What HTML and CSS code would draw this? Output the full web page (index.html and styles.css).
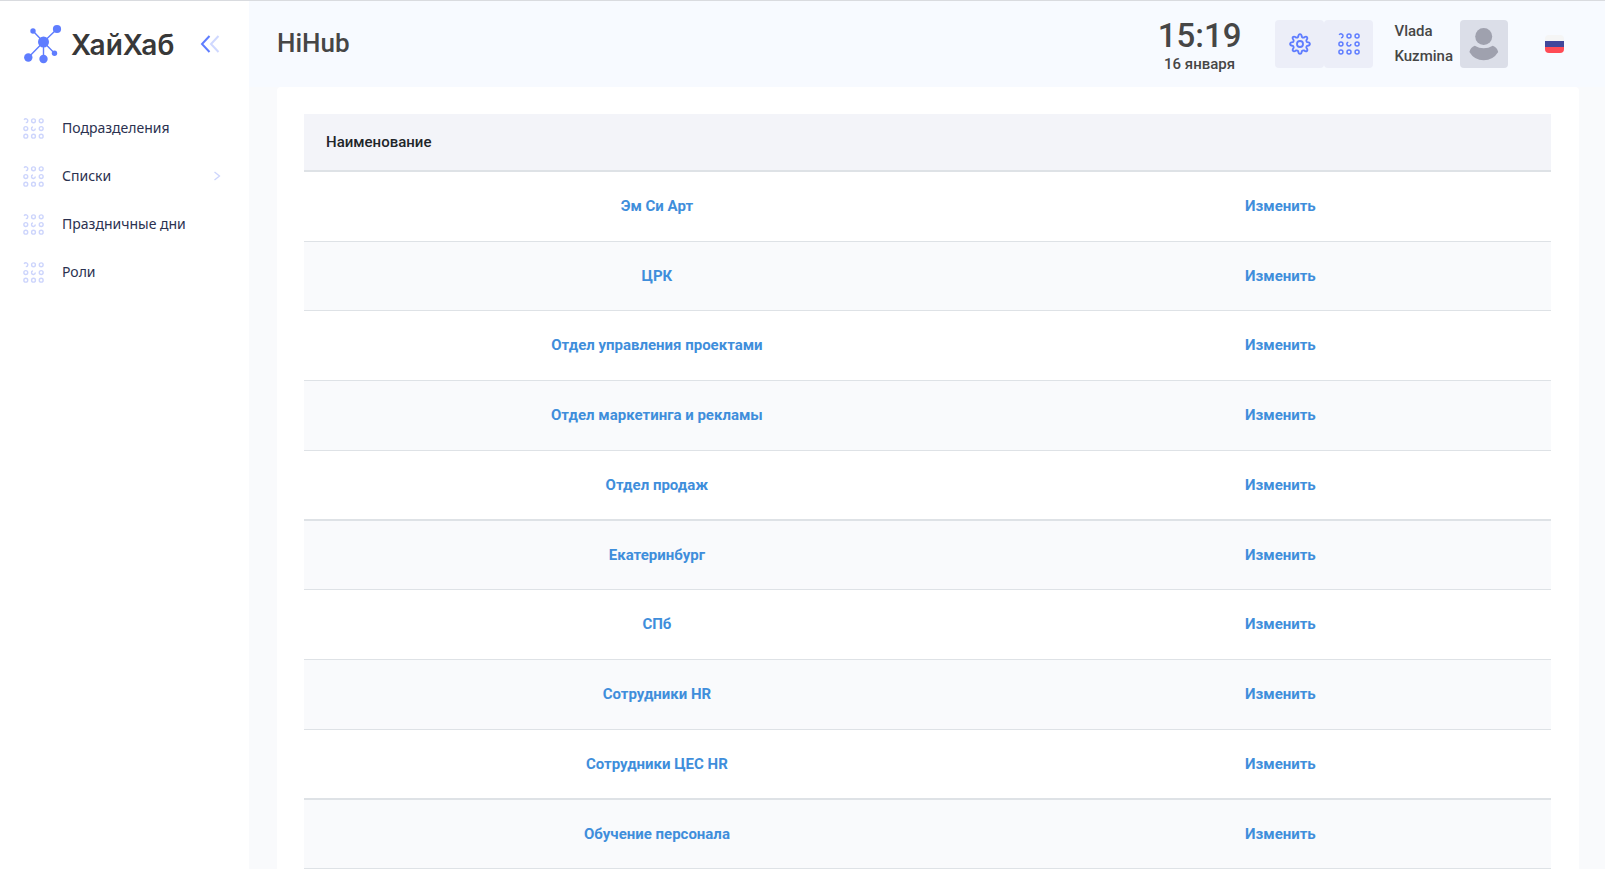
FILE: index.html
```html
<!DOCTYPE html>
<html lang="ru">
<head>
<meta charset="utf-8">
<title>ХайХаб</title>
<link rel="stylesheet" href="styles.css">
</head>
<body>
<svg class="sprite" aria-hidden="true">
  <symbol id="dots" viewBox="0 0 24 24">
    <g fill="none" stroke="currentColor" stroke-width="1.6">
      <path d="M1.300 2.100A2.200 2.200 0 1 1 3.200 5.300"/>
      <circle cx="12" cy="3.200" r="2.200"/><circle cx="20.800" cy="3.200" r="2.200"/>
      <circle cx="3.200" cy="12" r="2.200"/><path d="M11.200 10A2.200 2.200 0 1 0 14.100 12"/><circle cx="20.800" cy="12" r="2.200"/>
      <circle cx="3.200" cy="20.800" r="2.200"/><circle cx="12" cy="20.800" r="2.200"/><circle cx="20.800" cy="20.800" r="2.200"/>
    </g>
  </symbol>
</svg>
<div class="app">
  <aside class="sidebar">
    <div class="brand">
      <a class="brand-link" href="#">
        <svg class="brand-mark" viewBox="0 0 38 40" aria-hidden="true">
          <path d="M9 7l10.500 11L33 5M19.500 18 4.300 33.500M19.500 18v17M19.500 18l11 11.300" fill="none" stroke="#5f7dff" stroke-width="1.400"/>
          <g fill="#5f7dff"><circle cx="9" cy="7" r="2.700"/><circle cx="33" cy="5" r="4.100"/><circle cx="19.500" cy="18" r="5.500"/><circle cx="4.300" cy="33.500" r="4.200"/><circle cx="19.500" cy="35" r="4.200"/><circle cx="30.500" cy="29.300" r="2.700"/></g>
        </svg>
        <span class="brand-name">ХайХаб</span>
      </a>
      <button class="collapse" type="button" aria-label="Свернуть меню">
        <svg viewBox="0 0 20 18" aria-hidden="true"><g fill="none" stroke="#5f7dff" stroke-width="2"><path d="M9.500 1 2 9l7.500 8"/><path d="M18.500 1 11 9l7.500 8" opacity=".3"/></g></svg>
      </button>
    </div>
    <nav class="menu">
      <a href="#"><svg class="menu-icon"><use href="#dots"/></svg><span>Подразделения</span></a>
      <a href="#"><svg class="menu-icon"><use href="#dots"/></svg><span>Списки</span><svg class="arrow" viewBox="0 0 8 10"><path d="M1.500 1l5 4-5 4" fill="none" stroke="currentColor" stroke-width="1.300"/></svg></a>
      <a href="#"><svg class="menu-icon"><use href="#dots"/></svg><span>Праздничные дни</span></a>
      <a href="#"><svg class="menu-icon"><use href="#dots"/></svg><span>Роли</span></a>
    </nav>
  </aside>
  <div class="page">
    <header class="topbar">
      <h1>HiHub</h1>
      <div class="clock"><span class="time">15:19</span><span class="date">16 января</span></div>
      <div class="tools">
        <button type="button" aria-label="Настройки">
          <svg class="gear" viewBox="0 0 24 24" aria-hidden="true"><g fill="none" stroke="currentColor" stroke-width="2" stroke-linejoin="round"><circle cx="12" cy="12" r="3.300"/><path d="M10 4.200Q10.300 1.200 12 1.200T14 4.200Q14.800 5.200 16.100 5.100Q18.500 3.200 19.600 4.400T18.900 7.900Q18.800 9.200 19.800 10Q22.800 10.300 22.800 12T19.800 14Q18.800 14.800 18.900 16.100Q20.800 18.500 19.600 19.600T16.100 18.900Q14.800 18.800 14 19.800Q13.700 22.800 12 22.800T10 19.800Q9.200 18.800 7.900 18.900Q5.500 20.800 4.400 19.600T5.100 16.100Q5.200 14.800 4.200 14Q1.200 13.700 1.200 12T4.200 10Q5.200 9.200 5.100 7.900Q3.200 5.500 4.400 4.400T7.900 5.100Q9.200 5.200 10 4.200Z"/></g></svg>
        </button>
        <button type="button" aria-label="Приложения"><svg class="grid-icon"><use href="#dots"/></svg></button>
      </div>
      <a class="user" href="#">
        <span class="user-name">Vlada<br>Kuzmina</span>
        <svg class="avatar" viewBox="0 0 48 48" aria-hidden="true"><rect width="48" height="48" rx="4" fill="#dbdee8"/><g fill="#9fa1ae"><circle cx="23.700" cy="16.500" r="8.500"/><path d="M14.800 25.700Q19 28.300 23.700 28.300T32.800 25.700Q37 27 38.200 32Q33 40.300 23.700 40.300T9.400 32Q10.600 27 14.800 25.700Z"/></g></svg>
      </a>
      <button class="lang" type="button" aria-label="Русский">
        <svg viewBox="0 0 19 18" aria-hidden="true"><path d="M0 6V4Q0 0 4 0H15Q19 0 19 4V6Z" fill="#f5f5f5"/><path d="M0 6H19V12H0Z" fill="#41479b"/><path d="M0 12H19V14Q19 18 15 18H4Q0 18 0 14Z" fill="#ff4b55"/></svg>
      </button>
    </header>
    <main class="card">
      <table>
        <colgroup><col class="col-name"><col></colgroup>
        <thead><tr><th scope="col">Наименование</th><td></td></tr></thead>
        <tbody>
          <tr><td><a href="#">Эм Си Арт</a></td><td><a href="#">Изменить</a></td></tr>
          <tr><td><a href="#">ЦРК</a></td><td><a href="#">Изменить</a></td></tr>
          <tr><td><a href="#">Отдел управления проектами</a></td><td><a href="#">Изменить</a></td></tr>
          <tr><td><a href="#">Отдел маркетинга и рекламы</a></td><td><a href="#">Изменить</a></td></tr>
          <tr class="group-end"><td><a href="#">Отдел продаж</a></td><td><a href="#">Изменить</a></td></tr>
          <tr><td><a href="#">Екатеринбург</a></td><td><a href="#">Изменить</a></td></tr>
          <tr><td><a href="#">СПб</a></td><td><a href="#">Изменить</a></td></tr>
          <tr><td><a href="#">Сотрудники HR</a></td><td><a href="#">Изменить</a></td></tr>
          <tr class="group-end"><td><a href="#">Сотрудники ЦЕС HR</a></td><td><a href="#">Изменить</a></td></tr>
          <tr><td><a href="#">Обучение персонала</a></td><td><a href="#">Изменить</a></td></tr>
        </tbody>
      </table>
    </main>
  </div>
</div>
</body>
</html>
```
FILE: styles.css
```css
* { box-sizing: border-box; }
html { height: 100%; overflow: hidden; }
body {
  margin: 0;
  height: 100%;
  font-family: Roboto, "Open Sans", sans-serif;
  font-size: 15px;
  color: #464646;
  background: #f9fafc;
}
a { color: inherit; text-decoration: none; }
button { padding: 0; border: 0; background: none; font: inherit; cursor: pointer; }
svg { display: block; flex: none; }
.sprite { display: none; }

.app { display: flex; min-height: 100%; border-top: 1px solid #d9dbdf; }
.sidebar { flex: none; width: 249px; background: #fff; }
.page { flex: 1; min-width: 0; }

.brand { display: flex; align-items: center; justify-content: space-between; height: 86px; padding: 0 29px 0 24px; }
.brand-link { display: flex; align-items: center; gap: 9px; }
.brand-mark { width: 38px; height: 40px; }
.brand-name { padding-top: 2px; font: 600 28px/40px Inter, sans-serif; color: #383838; }
.collapse svg { width: 20px; height: 18px; }

.menu { display: flex; flex-direction: column; padding: 17px 28px 0 23px; }
.menu a {
  display: flex;
  align-items: center;
  gap: 18px;
  height: 48px;
  font: 14px/20px "Noto Sans", sans-serif;
  color: #2b3150;
}
.menu-icon { width: 21px; height: 21px; color: #cdd5fc; }
.arrow { width: 8px; height: 10px; margin-left: auto; color: #cdd5fc; }

.topbar { display: flex; align-items: center; height: 86px; padding: 0 41px 0 28px; background: #f7faff; }
.topbar h1 { flex: 1; margin: 0; padding-bottom: 2px; font-size: 26px; font-weight: 500; line-height: 32px; }
.clock { display: flex; flex-direction: column; align-items: center; padding-top: 4px; font-weight: 500; }
.time { font-size: 33px; line-height: 36px; }
.date { font-size: 15px; line-height: 20px; }
.tools { display: flex; margin-left: 34px; }
.tools button {
  display: flex;
  align-items: center;
  justify-content: center;
  width: 49px;
  height: 48px;
  border-radius: 4px;
  background: #eceef8;
  color: #5f7dff;
}
.gear, .grid-icon { width: 22px; height: 22px; }
.user { display: flex; align-items: center; gap: 7px; margin-left: 21px; font-weight: 500; line-height: 25px; }
.avatar { width: 48px; height: 48px; }
.lang { margin-left: 37px; }
.lang svg { width: 19px; height: 18px; }

.card { margin: 0 26px 0 28px; padding: 27px 28px 27px 27px; background: #fff; border-radius: 4px; }
table { width: 100%; border-collapse: separate; border-spacing: 0; table-layout: fixed; }
.col-name { width: 56.6%; }
thead th, thead td { height: 58px; background: #f3f4f9; border-bottom: 2px solid #dee2e6; }
th { padding: 0 22px; text-align: left; font-weight: 500; color: #212529; }
tbody td { height: 70px; padding: 0 22px 1px; text-align: center; border-bottom: 1px solid #dee2e6; font-weight: 700; color: #3f8edb; }
tbody tr:nth-child(4n+2) td { height: 69px; }
tbody tr:nth-child(even) td { background: #f9fafc; }
tbody .group-end td { border-bottom-width: 2px; }
```
